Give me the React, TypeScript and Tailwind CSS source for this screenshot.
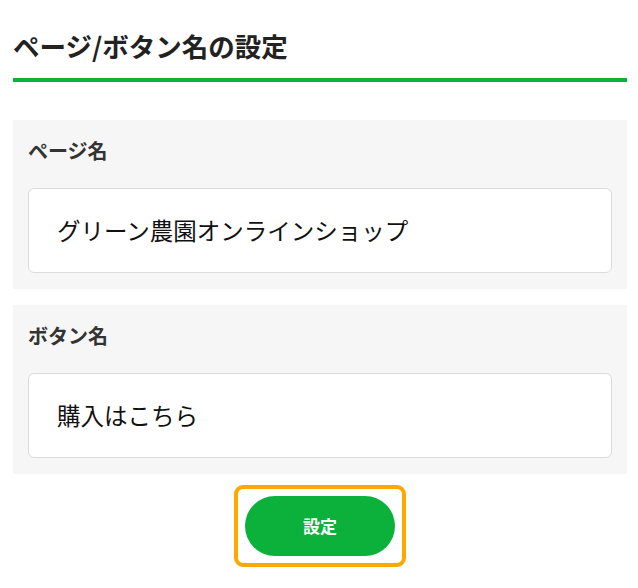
import React from "react";

const font = { fontFamily: '"Noto Sans CJK JP", "Noto Sans", sans-serif' };

function Field({ label, value }: { label: string; value: string }) {
  return (
    <div className="bg-[#f6f6f6] px-[15px] pt-[19px] pb-[16px]">
      <p className="text-[20px] leading-[24px] font-bold text-[#333]">{label}</p>
      <div className="mt-[25px] h-[85px] flex items-center rounded-[6px] border border-[#dcdcdc] bg-white px-[28px]">
        <span className="text-[23.5px] text-[#111]">{value}</span>
      </div>
    </div>
  );
}

export default function App() {
  return (
    <div style={font} className="w-[638px] h-[588px] bg-white px-[13px] pr-[11px]">
      <div className="pt-[30px] pb-[16px] border-b-4 border-[#0bb13a]">
        <h1 className="text-[26.5px] leading-[32px] font-bold text-[#222]">ページ/ボタン名の設定</h1>
      </div>

      <div className="mt-[38px] flex flex-col gap-[16px]">
        <Field label="ページ名" value="グリーン農園オンラインショップ" />
        <Field label="ボタン名" value="購入はこちら" />
      </div>

      <div className="mt-[11px] flex justify-center">
        <div className="rounded-[9px] border-[4px] border-[#ffa800] p-[7px]">
          <button className="w-[150px] h-[60px] rounded-full bg-[#0bb13a] text-white text-[17px] font-bold">
            設定
          </button>
        </div>
      </div>
    </div>
  );
}
